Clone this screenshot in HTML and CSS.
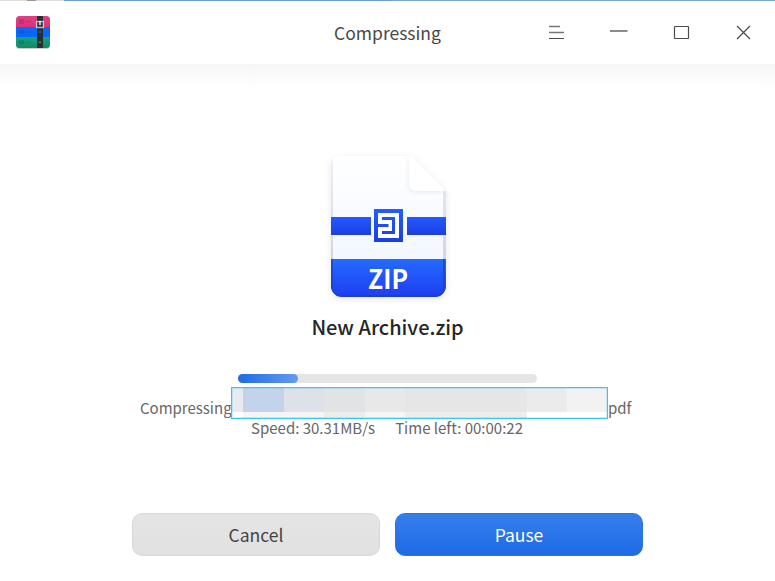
FILE: index.html
```html
<!DOCTYPE html>
<html lang="en">
<head>
<meta charset="utf-8">
<title>Compressing</title>
<link rel="stylesheet" href="styles.css">
</head>
<body>
<div class="window">
  <div class="edge"><i class="edge-gray"></i><i class="edge-blue"></i><i class="edge-soft"></i></div>
  <header class="titlebar">
    <svg class="logo" width="36" height="36" viewBox="0 0 36 36">
      <defs><clipPath id="lc"><rect x="1" y="1" width="34" height="32" rx="3.5"/></clipPath>
      <linearGradient id="pink" x2="0" y2="1"><stop stop-color="#d94486"/><stop offset="1" stop-color="#e03078"/></linearGradient>
      <linearGradient id="green" x2="0" y2="1"><stop stop-color="#12a584"/><stop offset="1" stop-color="#168363"/></linearGradient></defs>
      <rect x="1" y="3" width="34" height="31" rx="3.5" fill="#ccc"/>
      <g clip-path="url(#lc)">
        <rect width="36" height="12" fill="url(#pink)"/>
        <rect y="12" width="36" height="10" fill="#0868fa"/>
        <rect y="22" width="36" height="12" fill="url(#green)"/>
        <path d="M4 4h5v5H4zM4 15h5v4H4zM4 25h5v4H4z" fill="#302050" opacity=".2"/>
        <path d="M10 6.500h5M10 17h5M10 27h5" stroke="#302050" opacity=".18"/>
        <rect x="22" width="6" height="34" fill="#2b2d35"/>
        <rect x="21.500" y="6.500" width="7" height="6" fill="#383b42" stroke="#c5c5c5" stroke-width="1.300"/>
        <path d="M25 6v4" stroke="#fff" stroke-width="1.300"/>
        <path d="M24 16h2v2h-2z" fill="#105cad"/><path d="M24 26.500h2v1.500h-2z" fill="#14a578"/>
      </g>
    </svg>
    <h1 class="title">Compressing</h1>
    <svg class="controls" width="206" height="20" viewBox="0 0 206 20" fill="none" stroke="#4c4c4c">
      <path d="M1 4.500h11M1 10.500h15" stroke="#777" stroke-width="1.400"/><path d="M1 16.500h15"/>
      <path d="M62 9h17.500" stroke="#666" stroke-width="1.500"/>
      <rect x="126.500" y="4.500" width="14" height="12" rx=".5" stroke-width="1.200"/>
      <path d="M189 4l13 13M202 4l-13 13" stroke-width="1.300"/>
    </svg>
  </header>
  <main class="content">
    <svg class="file" width="140" height="160" viewBox="0 0 140 160">
      <defs>
        <linearGradient id="paper" x2="0" y2="1"><stop stop-color="#fff"/><stop offset="1" stop-color="#eef5ff"/></linearGradient>
        <linearGradient id="band" x2="0" y2="1"><stop stop-color="#235aff"/><stop offset="1" stop-color="#1c3fe2"/></linearGradient>
        <linearGradient id="foot" x2="0" y2="1"><stop stop-color="#246bff"/><stop offset="1" stop-color="#1e3df0"/></linearGradient>
        <linearGradient id="side" x2="0" y2="1"><stop stop-color="#eef0f6"/><stop offset="1" stop-color="#c4cbdc"/></linearGradient>
        <linearGradient id="glyph" gradientUnits="userSpaceOnUse" x1="0" y1="64" x2="0" y2="98"><stop stop-color="#235eff"/><stop offset="1" stop-color="#1c3ce0"/></linearGradient>
        <clipPath id="shape"><path d="M22 11H93L128 46V141a11 11 0 0 1-11 11H24a11 11 0 0 1-11-11V20a9 9 0 0 1 9-9z"/></clipPath>
        <filter id="shadow" x="-20%" y="-20%" width="140%" height="140%"><feDropShadow dx="0" dy="2" stdDeviation="3" flood-color="#000" flood-opacity=".1"/></filter>
        <filter id="foldshadow"><feDropShadow dx="-1" dy="2" stdDeviation="2" flood-opacity=".06"/></filter>
      </defs>
      <path filter="url(#shadow)" d="M22 11H93L128 46V141a11 11 0 0 1-11 11H24a11 11 0 0 1-11-11V20a9 9 0 0 1 9-9z" fill="#fff"/>
      <g clip-path="url(#shape)">
        <rect x="13" y="11" width="115" height="141" fill="url(#paper)"/>
        <path d="M13 11h2v141h-2zM125 11h3v141h-3z" fill="url(#side)"/>
        <rect x="13" y="72" width="40" height="18" fill="url(#band)"/>
        <rect x="89" y="72" width="39" height="18" fill="url(#band)"/>
        <rect x="13" y="114" width="115" height="38" fill="url(#foot)"/>
        <path d="M14 114v28q0 9 10 9h93q9 0 9-9v-28" fill="none" stroke="#1b3bc5" stroke-width="2" opacity=".65"/>
        <path d="M91 9V38q0 8 8 8h29z" fill="#fff" filter="url(#foldshadow)"/>
      </g>
      <path d="M56 64h29v33H56z" fill="url(#glyph)"/>
      <path d="M60 68h21v25H60z" fill="#fff"/>
      <path d="M64 73.500h11.500V87.500H64M59 80.500h11.500" fill="none" stroke="url(#glyph)" stroke-width="3"/>
      <text class="zip" x="50" y="144" textLength="40" lengthAdjust="spacingAndGlyphs">ZIP</text>
    </svg>
    <h2 class="name">New Archive.zip</h2>
    <div class="progress"><div class="fill"></div></div>
    <div class="current"><span>Compressing</span>
      <div class="redacted">
        <i class="c1"></i><i class="c2"></i><i class="c3"></i><i class="c4"></i><i class="c5"></i><i class="c6"></i><i class="c7"></i><i class="c8"></i>
      </div><span>pdf</span></div>
    <div class="stats"><span>Speed: 30.31MB/s</span><span>Time left: 00:00:22</span></div>
    <div class="actions"><button class="btn cancel">Cancel</button><button class="btn pause">Pause</button></div>
  </main>
</div>
</body>
</html>
```
FILE: styles.css
```css
* { box-sizing: border-box; }
body { margin: 0; background: #fff; font-family: "Noto Sans CJK SC", sans-serif; }
.window { height: 581px; display: flex; flex-direction: column; overflow: hidden; }
.edge { display: flex; height: 1px; }
.edge-gray { width: 64px; background: linear-gradient(90deg, #ddd 27px, #999 27px 36px, #ddd 36px); }
.edge-blue { width: 328px; background: #6a9fda; }
.edge-soft { flex: 1; background: #7ca8d5; }
.titlebar { height: 63px; display: grid; grid-template-columns: 245px 1fr 245px; align-items: center; }
.logo { margin-left: 15px; }
.title { margin: 0; text-align: center; font-size: 17.5px; line-height: 28px; font-weight: 400; color: #484848; }
.controls { margin-left: 18px; margin-top: -1px; }
.content { flex: 1; display: flex; flex-direction: column; align-items: center; background: linear-gradient(#f6f6f6, #fff 24px); }
.file { margin-top: 81px; margin-left: 1px; }
.zip { font: 700 26.5px "Noto Sans CJK SC", sans-serif; fill: #fff; }
.name { margin: 6px 0 0; height: 32px; line-height: 32px; font-size: 20px; font-weight: 500; color: #262626; }
.progress { width: 299px; height: 9px; margin-top: 31px; margin-right: 1px; border-radius: 5px; background: #e5e5e5; }
.fill { width: 60px; height: 9px; border-radius: 5px; background: linear-gradient(90deg, #1e6be6, #659af0); }
.current { display: grid; grid-template-columns: 91px 377px 25px; width: 493px; margin-top: 4px; margin-right: 2px; height: 32px; font-size: 15px; line-height: 22px; color: #666; white-space: nowrap; }
.current span { padding-top: 10px; }
.redacted { display: flex; height: 32px; border: 1px solid #3dc5f2; outline: 1px solid #3dc5f244; outline-offset: -2px; }
.redacted i { border-bottom: 6px solid #f5f5f5; }
.c1 { width: 11px; background: #e7ebf0; }
.c2 { width: 41px; background: #c4d3ec; }
.c3 { width: 40px; background: #dde2e9; }
.c4 { width: 41px; background: #e2e3e4; }
.c5 { width: 40px; background: #e8e8e8; }
.c6 { width: 122px; background: #e6e6e6; }
.c7 { width: 40px; background: #ebebeb; }
.c8 { flex: 1; background: #f2f2f2; }
.redacted .c1, .redacted .c7, .redacted .c8 { border-bottom-color: #fff; }
.redacted .c4, .redacted .c6 { border-bottom-color: #ededed; }
.stats { display: flex; gap: 20px; height: 20px; line-height: 18px; margin-right: 1px; font-size: 15px; color: #666; white-space: nowrap; }
.actions { display: flex; gap: 15px; margin-top: 74px; }
.btn { width: 248px; height: 43px; padding: 0; border-radius: 10px; font: 400 17.5px "Noto Sans CJK SC", sans-serif; }
.cancel { border: 1px solid #d8d8d8; background: linear-gradient(#e5e5e5, #e1e1e1); color: #444; }
.pause { border: 1px solid #2b73e2; background: linear-gradient(#357eeb, #1e6be6); color: #fff; }
```
